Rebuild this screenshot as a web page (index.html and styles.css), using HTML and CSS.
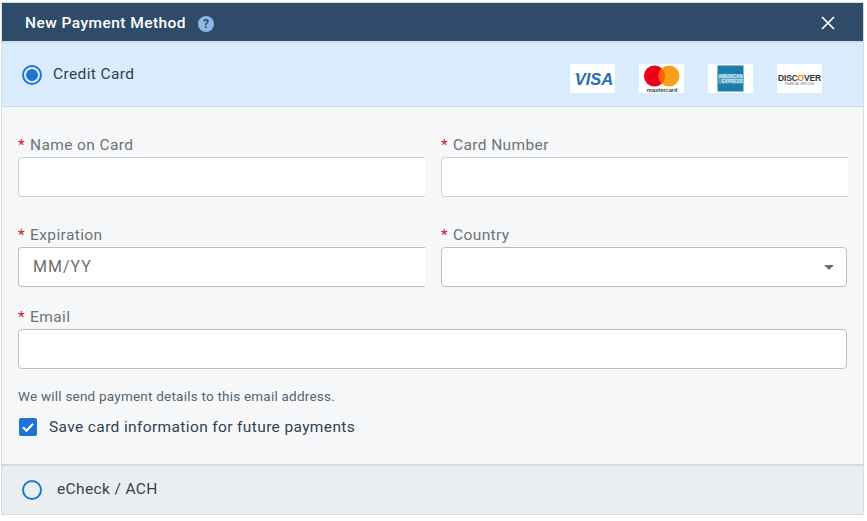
FILE: index.html
```html
<!DOCTYPE html>
<html lang="en">
<head>
<meta charset="utf-8">
<title>New Payment Method</title>
<link rel="stylesheet" href="styles.css">
</head>
<body>
<div class="dialog">
  <header class="titlebar">
    <div class="title-group">
      <h1 class="title">New Payment Method</h1>
      <svg class="help" width="16" height="16" viewBox="0 0 16 16" aria-hidden="true"><circle cx="8" cy="8" r="8" fill="#8db8e6"/><text x="8" y="12.4" text-anchor="middle" class="help-mark">?</text></svg>
    </div>
    <svg class="close" width="14" height="14" viewBox="0 0 14 14" aria-hidden="true"><path d="M1 1 L13 13 M13 1 L1 13" stroke="#fff" stroke-width="1.7" fill="none"/></svg>
  </header>

  <section class="method method-active">
    <div class="method-label">
      <span class="radio radio-on"></span>
      <span class="method-name">Credit Card</span>
    </div>
    <div class="cards">
      <svg class="card" width="45" height="29" viewBox="0 0 45 29" aria-hidden="true">
        <rect width="45" height="29" fill="#fff"/>
        <path d="M3 9.5 C7 9.5 10 11 12 14 C9.500 12 7 10.800 3 9.500Z" fill="#e9a23b"/>
        <text x="24" y="20.500" text-anchor="middle" class="visa">VISA</text>
      </svg>
      <svg class="card" width="45" height="29" viewBox="0 0 45 29" aria-hidden="true">
        <rect width="45" height="29" fill="#fff"/>
        <circle cx="15.500" cy="12" r="10.500" fill="#eb001b"/>
        <circle cx="30" cy="12" r="10.500" fill="#f79e1b"/>
        <path d="M22.750 4.400 A10.500 10.500 0 0 1 22.750 19.600 A10.500 10.500 0 0 1 22.750 4.400Z" fill="#ff5f00"/>
        <text x="23" y="28" text-anchor="middle" class="mc">mastercard</text>
      </svg>
      <svg class="card" width="45" height="29" viewBox="0 0 45 29" aria-hidden="true">
        <rect width="45" height="29" fill="#fff"/>
        <rect x="9.500" y="1.500" width="26" height="26" fill="#1a7dab"/>
        <rect x="9.500" y="10" width="26" height="9.500" fill="#5ba4c7"/>
        <text x="22.500" y="14" text-anchor="middle" class="amex">AMERICAN</text>
        <text x="24.500" y="18.800" text-anchor="middle" class="amex">EXPRESS</text>
      </svg>
      <svg class="card" width="45" height="29" viewBox="0 0 45 29" aria-hidden="true">
        <rect width="45" height="29" fill="#fff"/>
        <text x="22.500" y="16.500" text-anchor="middle" class="disc">DISC<tspan fill="#e8842c">O</tspan>VER</text>
        <text x="22.500" y="20.500" text-anchor="middle" class="disc-sub">FINANCIAL SERVICES</text>
      </svg>
    </div>
  </section>

  <form class="form">
    <div class="row row-first">
      <div class="field field-half">
        <label class="label" for="name"><span class="req">*</span>Name on Card</label>
        <input class="input input-clipped" id="name" type="text">
      </div>
      <div class="field field-half">
        <label class="label" for="num"><span class="req">*</span>Card Number</label>
        <input class="input input-clipped" id="num" type="text">
      </div>
    </div>
    <div class="row row-second">
      <div class="field field-half">
        <label class="label" for="exp"><span class="req">*</span>Expiration</label>
        <input class="input input-clipped input-dark" id="exp" type="text" placeholder="MM/YY">
      </div>
      <div class="field field-country">
        <label class="label" for="country"><span class="req">*</span>Country</label>
        <div class="select-wrap">
          <select class="input input-dark select" id="country"><option></option></select>
          <span class="caret"></span>
        </div>
      </div>
    </div>
    <div class="field field-email">
      <label class="label" for="email"><span class="req">*</span>Email</label>
      <input class="input input-dark" id="email" type="text">
    </div>
    <p class="hint">We will send payment details to this email address.</p>
    <div class="save">
      <span class="checkbox">
        <svg width="18" height="18" viewBox="0 0 18 18" aria-hidden="true"><path d="M4 9.300 L7.500 12.800 L14 5.800" stroke="#fff" stroke-width="2" fill="none"/></svg>
      </span>
      <span class="save-text">Save card information for future payments</span>
    </div>
  </form>

  <section class="method method-idle">
    <div class="method-label">
      <span class="radio"></span>
      <span class="method-name method-name-wide">eCheck / ACH</span>
    </div>
  </section>
</div>
</body>
</html>
```
FILE: styles.css
```css
* { box-sizing: border-box; }
html, body { margin: 0; padding: 0; background: #fff; }
body { width: 867px; height: 521px; overflow: hidden; font-family: Roboto, "Liberation Sans", sans-serif; }

.dialog {
  width: 863px;
  margin: 2px 0 0 1px;
  border-top: 1px solid #d4d9dd;
  border-left: 1px solid #d9dde1;
  border-right: 1px solid #d9dde1;
}

.titlebar {
  height: 38px;
  background: #2e4c69;
  display: flex;
  align-items: center;
  justify-content: space-between;
  padding: 2px 28px 0 23px;
}
.title-group { display: flex; align-items: center; gap: 12px; }
.title { margin: 0; color: #fff; font-size: 15.500px; font-weight: 500; letter-spacing: 0.45px; }
.help { display: block; margin-top: 1px; }
.help-mark { font: 700 12px Roboto, sans-serif; fill: #2e4c69; }
.close { display: block; }

.method { display: flex; align-items: center; justify-content: space-between; }
.method-active {
  height: 66px;
  background: #d9ecfd;
  border-top: 2px solid #d5dce1;
  border-bottom: 1px solid #ccd6dd;
  padding: 0 41px 0 20px;
}
.method-idle {
  height: 51px;
  background: #ebeef0;
  border-top: 2px solid #d5dadd;
  border-bottom: 1px solid #d5dadd;
  padding: 0 20px;
}
.method-label { display: flex; align-items: center; gap: 11px; }
.method-name { color: #33414c; font-size: 15.500px; letter-spacing: 0.37px; position: relative; top: -1px; }
.method-name-wide { margin-left: 4px; top: -1px; }
.radio { width: 20px; height: 20px; border: 2px solid #1f73d6; border-radius: 50%; display: block; flex: none; }
.radio-on { background: radial-gradient(circle, #1f73d6 0, #1f73d6 5.5px, transparent 6.2px); }

.cards { display: flex; gap: 24px; margin-top: 7px; }
.card { display: block; }
.visa { font: italic 700 16.500px "Liberation Sans", sans-serif; fill: #2a6cb0; }
.mc { font: 500 6px Roboto, sans-serif; fill: #333; }
.amex { font: 700 4.500px "Liberation Sans", sans-serif; fill: #d4ecf6; }
.disc { font: 700 8.500px "Liberation Sans", sans-serif; fill: #333; letter-spacing: -0.2px; }
.disc-sub { font: 400 2.800px "Liberation Sans", sans-serif; fill: #777; }

.form { background: #f5f7f9; height: 357px; padding: 29px 15px 0 16px; }
.row { display: flex; gap: 16px; }
.row-second { margin-top: 29px; }
.field { display: flex; flex-direction: column; }
.field-half { width: 407px; }
.field-country { width: 406px; }
.field-email { margin-top: 21px; width: 829px; }

.label { color: #6d7378; font-size: 15.500px; line-height: 18px; height: 21px; letter-spacing: 0.38px; }
.req { color: #d8112f; margin-right: 5px; }

.input {
  display: block;
  width: 100%;
  height: 40px;
  background: #fff;
  border: 1px solid #b9bdc1;
  border-radius: 4px;
  padding: 0 14px 2px;
  font: 16px Roboto, sans-serif;
  letter-spacing: 1px;
  outline: none;
}
.input-clipped { border-right: none; border-radius: 4px 0 0 4px; border-color: #cbd2d9; }
.input-dark { border-color: #bcbfc3; }
.input::placeholder { color: #6a6f74; opacity: 1; }

.select-wrap { position: relative; }
.select { appearance: none; -webkit-appearance: none; }
.caret {
  position: absolute;
  right: 13px;
  top: 18px;
  width: 0;
  height: 0;
  border-left: 5px solid transparent;
  border-right: 5px solid transparent;
  border-top: 5px solid #6b6f73;
}

.hint { margin: 18px 0 0 0; color: #56646f; font-size: 13.500px; line-height: 18px; letter-spacing: 0.22px; }
.save { display: flex; align-items: center; gap: 12px; margin-top: 13px; }
.checkbox { width: 18px; height: 18px; border-radius: 2px; background: #1f73d6; display: block; flex: none; margin-left: 1px; }
.checkbox svg { display: block; }
.save-text { color: #33414c; font-size: 15.500px; letter-spacing: 0.37px; }
```
